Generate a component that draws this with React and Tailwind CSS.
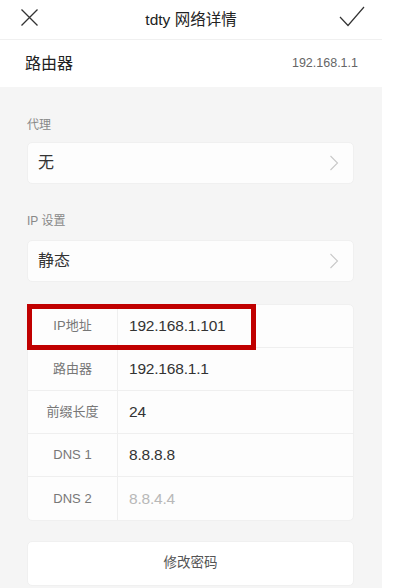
import React from "react";

const cjk = { fontFamily: '"Liberation Sans", "Noto Sans CJK SC", sans-serif' };

function Chevron() {
  return (
    <svg width="10" height="16" viewBox="0 0 10 16" className="shrink-0">
      <path d="M1.5 1 L8.5 8 L1.5 15" fill="none" stroke="#c8c8c8" strokeWidth="1.1" />
    </svg>
  );
}

function Row({ label, value, valueClass = "text-[#333]", last = false }) {
  return (
    <div className={`flex h-[43px] ${last ? "" : "border-b border-[#efefef]"}`}>
      <div className="w-[90px] shrink-0 border-r border-[#efefef] flex items-center justify-center text-[13px] text-[#777]">
        {label}
      </div>
      <div className={`flex-1 flex items-center pl-[11px] text-[15.5px] tracking-[-0.2px] ${valueClass}`}>{value}</div>
    </div>
  );
}

export default function App() {
  return (
    <div className="w-[393px] h-[588px] bg-white overflow-hidden" style={cjk}>
      <div className="w-[382px] h-[588px] flex flex-col">
        {/* header */}
        <div className="relative h-[40px] shrink-0 border-b border-[#f0f0f0] flex items-center justify-center">
          <svg className="absolute left-[20px] top-[8px]" width="19" height="19" viewBox="0 0 19 19">
            <path d="M1.5 1.5 L17.5 17.5 M17.5 1.5 L1.5 17.5" stroke="#333" strokeWidth="1.3" fill="none" />
          </svg>
          <span className="text-[15.5px] text-[#222]">tdty 网络详情</span>
          <svg className="absolute left-[339px] top-[6px]" width="26" height="21" viewBox="0 0 26 21">
            <path d="M1 11 L9 19.5 L25 1" stroke="#333" strokeWidth="1.2" fill="none" />
          </svg>
        </div>
        {/* router row */}
        <div className="h-[47px] shrink-0 flex items-center justify-between pl-[25px] pr-[24px]">
          <span className="text-[16px] text-[#222]">路由器</span>
          <span className="text-[12.5px] text-[#666]">192.168.1.1</span>
        </div>
        {/* gray body */}
        <div className="flex-1 bg-[#f5f5f5] pl-[27px] pr-[28px] pt-[30px] flex flex-col">
          <div className="h-[17px] leading-[17px] text-[12px] text-[#888]">代理</div>
          <div className="mt-[8px] h-[42px] rounded-[5px] bg-[#fdfdfd] border border-[#f0f0f0] flex items-center justify-between pl-[10px] pr-[14px]">
            <span className="text-[16px] text-[#333]">无</span>
            <Chevron />
          </div>
          <div className="mt-[29px] h-[17px] leading-[17px] text-[12px] text-[#888]">IP 设置</div>
          <div className="mt-[10px] h-[42px] rounded-[5px] bg-[#fdfdfd] border border-[#f0f0f0] flex items-center justify-between pl-[10px] pr-[14px]">
            <span className="text-[16px] text-[#333]">静态</span>
            <Chevron />
          </div>
          <div className="relative mt-[22px]">
            <div className="rounded-[5px] bg-[#fdfdfd] border border-[#f0f0f0] overflow-hidden flex flex-col">
              <Row label="IP地址" value="192.168.1.101" />
              <Row label="路由器" value="192.168.1.1" />
              <Row label="前缀长度" value="24" />
              <Row label="DNS 1" value="8.8.8.8" />
              <Row label="DNS 2" value="8.8.4.4" valueClass="text-[#b8b8b8]" last />
            </div>
            <div className="absolute left-0 top-0 w-[229px] h-[46px] border-[5px] border-[#c00000]" />
          </div>
          <div className="mt-[20px] h-[45px] rounded-[5px] bg-white border border-[#f0f0f0] flex items-center justify-center text-[13.5px] text-[#555]">
            修改密码
          </div>
        </div>
      </div>
    </div>
  );
}
